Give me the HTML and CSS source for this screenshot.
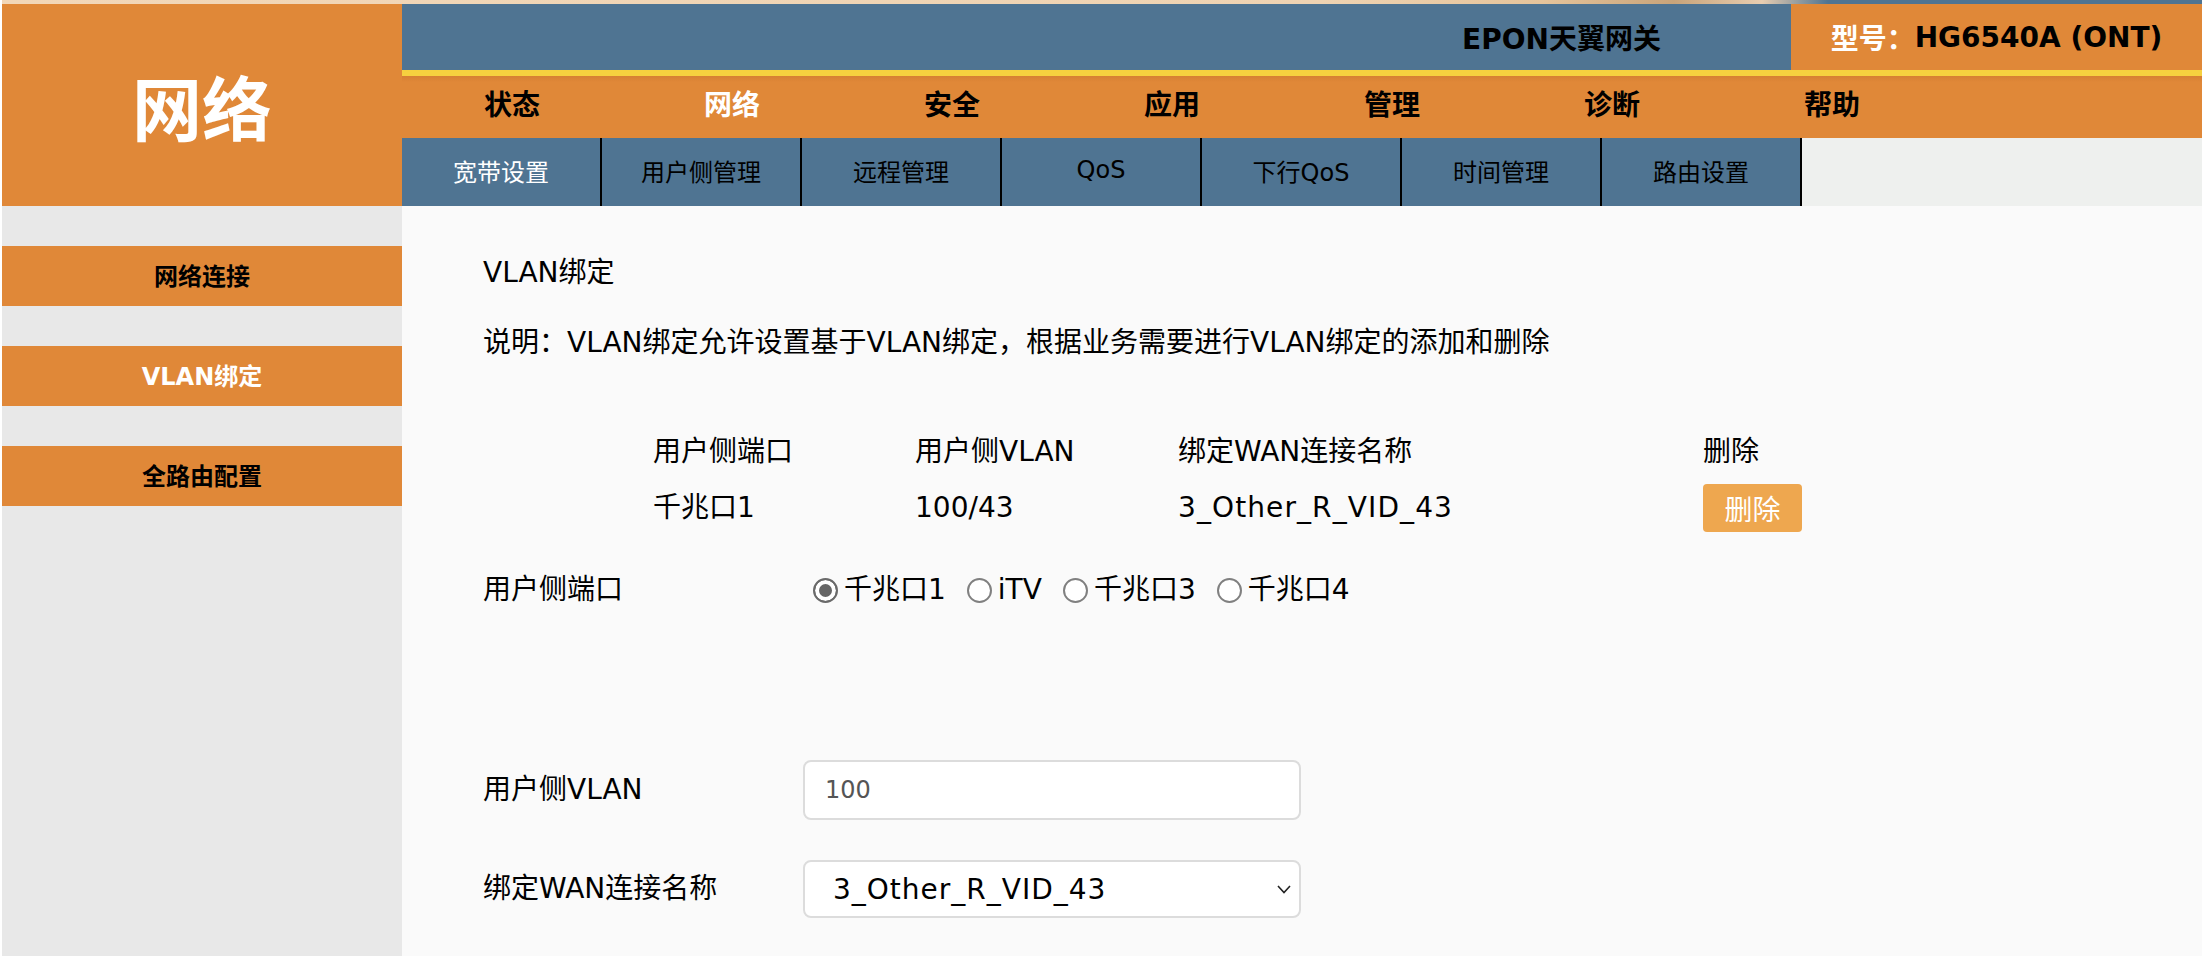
FILE: index.html
```html
<!DOCTYPE html>
<html lang="zh-CN">
<head>
<meta charset="utf-8">
<title>VLAN绑定</title>
<link rel="stylesheet" href="styles.css">
</head>
<body>
<div class="page">
  <div class="topstrip"></div>
  <header class="header">
    <div class="logo">网络</div>
    <div class="header-main">
      <div class="titlebar">
        <div class="title">EPON天翼网关</div>
        <div class="model"><span class="model-label">型号：</span>HG6540A (ONT)</div>
      </div>
      <div class="yellow"></div>
      <nav class="menu">
        <a class="menu-item">状态</a>
        <a class="menu-item active">网络</a>
        <a class="menu-item">安全</a>
        <a class="menu-item">应用</a>
        <a class="menu-item">管理</a>
        <a class="menu-item">诊断</a>
        <a class="menu-item">帮助</a>
      </nav>
      <nav class="subnav">
        <a class="tab active">宽带设置</a>
        <a class="tab">用户侧管理</a>
        <a class="tab">远程管理</a>
        <a class="tab">QoS</a>
        <a class="tab">下行QoS</a>
        <a class="tab">时间管理</a>
        <a class="tab">路由设置</a>
      </nav>
    </div>
  </header>
  <div class="main">
    <aside class="sidebar">
      <a class="side-item">网络连接</a>
      <a class="side-item active">VLAN绑定</a>
      <a class="side-item">全路由配置</a>
    </aside>
    <section class="content">
      <div class="page-title">VLAN绑定</div>
      <div class="desc">说明：VLAN绑定允许设置基于VLAN绑定，根据业务需要进行VLAN绑定的添加和删除</div>
      <div class="table">
        <div class="th">用户侧端口</div>
        <div class="th">用户侧VLAN</div>
        <div class="th">绑定WAN连接名称</div>
        <div class="th">删除</div>
        <div class="td">千兆口1</div>
        <div class="td">100/43</div>
        <div class="td td-wide">3_Other_R_VID_43</div>
        <div class="td"><button class="btn-del">删除</button></div>
      </div>
      <div class="form-row row-radio">
        <div class="label">用户侧端口</div>
        <div class="radios">
          <label class="radio"><input type="radio" name="port" checked>千兆口1</label>
          <label class="radio"><input type="radio" name="port">iTV</label>
          <label class="radio"><input type="radio" name="port">千兆口3</label>
          <label class="radio"><input type="radio" name="port">千兆口4</label>
        </div>
      </div>
      <div class="form-row row-vlan">
        <div class="label">用户侧VLAN</div>
        <input class="text-input" type="text" value="100">
      </div>
      <div class="form-row row-wan">
        <div class="label">绑定WAN连接名称</div>
        <div class="select-wrap">
          <select class="select">
            <option>3_Other_R_VID_43</option>
          </select>
          <svg class="chevron" width="14" height="9" viewBox="0 0 14 9"><polyline points="1,1 7,7.5 13,1" fill="none" stroke="#222" stroke-width="1.6"/></svg>
        </div>
      </div>
    </section>
  </div>
</div>
</body>
</html>
```
FILE: styles.css
```css
html, body {
  margin: 0;
  padding: 0;
  background: #ffffff;
}
body {
  font-family: "DejaVu Sans", "Noto Sans CJK SC", sans-serif;
  color: #000;
}
a {
  text-decoration: none;
  color: inherit;
}
.page {
  width: 2200px;
  margin-left: 2px;
  min-height: 100vh;
  display: flex;
  flex-direction: column;
}
.topstrip {
  height: 4px;
  background: linear-gradient(90deg, #f2d7b8 0%, #efd3b2 60%, #e6c49b 70%, #c9a47a 76%, #e8cdb0 80%, #4f7492 83%, #4f7492 100%);
}
.header {
  display: flex;
  height: 202px;
}
.logo {
  width: 400px;
  background: #e08838;
  color: #fff;
  font-weight: bold;
  font-size: 70px;
  display: flex;
  align-items: center;
  justify-content: center;
  font-family: "Noto Sans CJK SC", sans-serif;
}
.header-main {
  flex: 1;
  display: flex;
  flex-direction: column;
}
.titlebar {
  height: 66px;
  display: flex;
  background: #4f7492;
}
.title {
  flex: 1;
  display: flex;
  align-items: center;
  justify-content: flex-end;
  padding-right: 130px;
  font-weight: bold;
  font-size: 28px;
}
.model {
  width: 411px;
  background: #e08838;
  display: flex;
  align-items: center;
  justify-content: center;
  font-weight: bold;
  font-size: 28px;
}
.model-label {
  color: #fff;
}
.yellow {
  height: 6px;
  background: #f6d03f;
}
.menu {
  height: 62px;
  display: flex;
  background: linear-gradient(180deg, #d67f33 0px, #e08838 6px, #e08838 100%);
}
.menu-item {
  width: 220px;
  display: flex;
  align-items: center;
  justify-content: center;
  padding-bottom: 9px;
  box-sizing: border-box;
  font-weight: bold;
  font-size: 28px;
}
.menu-item.active {
  color: #fff;
}
.subnav {
  height: 68px;
  display: flex;
  background: #eef0ee;
}
.tab {
  width: 200px;
  box-sizing: border-box;
  background: #4f7492;
  border-right: 2px solid #000;
  display: flex;
  align-items: center;
  justify-content: center;
  padding-bottom: 4px;
  font-size: 24px;
  color: #000;
}
.tab.active {
  color: #fff;
}
.main {
  flex: 1;
  display: flex;
}
.sidebar {
  width: 400px;
  background: #e8e8e8;
  padding-top: 40px;
  display: flex;
  flex-direction: column;
  gap: 40px;
}
.side-item {
  height: 60px;
  box-sizing: border-box;
  padding-bottom: 3px;
  background: #e08838;
  display: flex;
  align-items: center;
  justify-content: center;
  font-weight: bold;
  font-size: 24px;
  color: #000;
}
.side-item.active {
  color: #fff;
}
.content {
  flex: 1;
  background: #fafafa;
  padding-left: 81px;
  padding-top: 47px;
  font-size: 28px;
  line-height: 40px;
}
.page-title {
  height: 40px;
}
.desc {
  margin-top: 30px;
  height: 40px;
  white-space: nowrap;
}
.table {
  margin-top: 69px;
  margin-left: 170px;
  display: grid;
  grid-template-columns: 262px 263px 525px 120px;
  grid-template-rows: 40px 48px;
  row-gap: 12px;
  align-items: center;
}
.td-wide {
  letter-spacing: 1.1px;
}
.btn-del {
  width: 99px;
  height: 48px;
  border: none;
  border-radius: 4px;
  background: #eea74f;
  color: #fff;
  font-family: "Noto Sans CJK SC", sans-serif;
  font-size: 28px;
  padding: 0;
  display: block;
}
.form-row {
  display: flex;
  align-items: center;
}
.label {
  width: 320px;
}
.row-radio {
  margin-top: 38px;
  height: 40px;
}
.radios {
  display: flex;
  gap: 21px;
  padding-left: 10px;
}
.radio {
  display: flex;
  align-items: center;
}
.radio input {
  appearance: none;
  -webkit-appearance: none;
  width: 25px;
  height: 25px;
  margin: 0 6px 0 0;
  border: 2px solid #808080;
  border-radius: 50%;
  background: #fff;
  box-sizing: border-box;
}
.radio input:checked {
  background: #666;
  border-color: #6a6a6a;
  box-shadow: inset 0 0 0 4px #fff;
}
.row-vlan {
  margin-top: 150px;
  height: 60px;
}
.text-input {
  width: 498px;
  height: 60px;
  box-sizing: border-box;
  border: 2px solid #dcdcdc;
  border-radius: 8px;
  background: #fff;
  padding: 0 0 0 20px;
  font-family: "DejaVu Sans", "Noto Sans CJK SC", sans-serif;
  font-size: 24px;
  color: #555;
  outline: none;
}
.row-wan {
  margin-top: 40px;
  height: 58px;
}
.select-wrap {
  position: relative;
  width: 498px;
  height: 58px;
}
.select {
  appearance: none;
  -webkit-appearance: none;
  width: 100%;
  height: 100%;
  box-sizing: border-box;
  border: 2px solid #dcdcdc;
  border-radius: 8px;
  background: #fff;
  padding: 0 0 0 28px;
  font-family: "DejaVu Sans", "Noto Sans CJK SC", sans-serif;
  font-size: 28px;
  letter-spacing: 1px;
  color: #000;
  outline: none;
}
.chevron {
  position: absolute;
  right: 10px;
  top: 25px;
}
```
